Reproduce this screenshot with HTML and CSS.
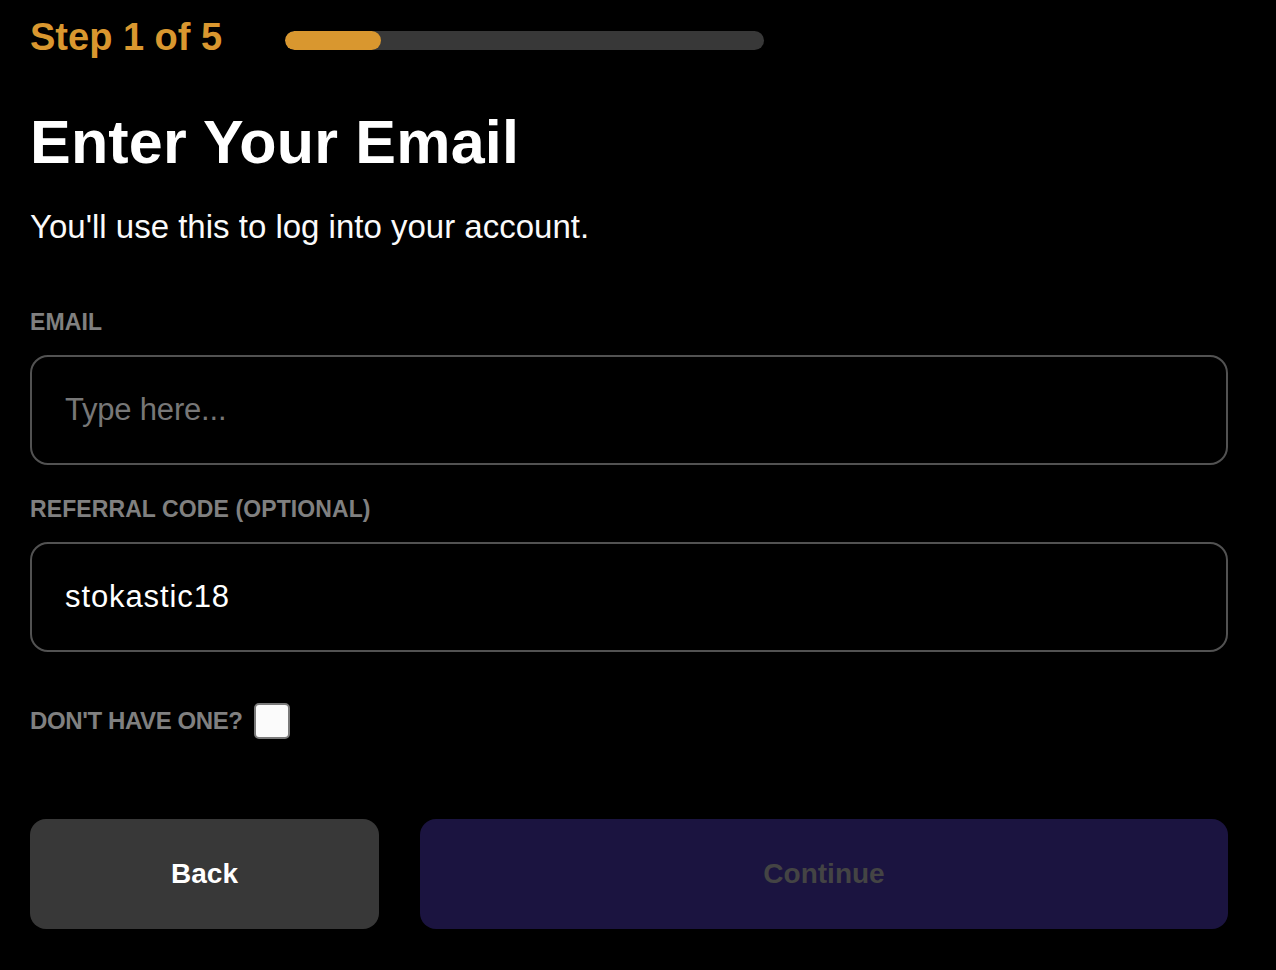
FILE: index.html
```html
<!DOCTYPE html>
<html lang="en">
<head>
<meta charset="utf-8">
<title>Enter Your Email</title>
<link rel="stylesheet" href="styles.css">
</head>
<body>
<main class="signup">
  <div class="progress-row">
    <span class="step">Step 1 of 5</span>
    <div class="track"><div class="fill" style="width:20%"></div></div>
  </div>
  <h1 class="title">Enter Your Email</h1>
  <p class="subtitle">You'll use this to log into your account.</p>
  <label class="field-label" for="email">EMAIL</label>
  <input class="text-input" id="email" type="text" placeholder="Type here...">
  <label class="field-label field-label--second" for="referral">REFERRAL CODE (OPTIONAL)</label>
  <input class="text-input" id="referral" type="text" value="stokastic18">
  <div class="no-code">
    <span class="no-code-text">DON'T HAVE ONE?</span>
    <span class="checkbox"></span>
  </div>
  <div class="actions">
    <button class="btn btn-back" type="button">Back</button>
    <button class="btn btn-continue" type="button" disabled>Continue</button>
  </div>
</main>
</body>
</html>
```
FILE: styles.css
```css
html, body {
  margin: 0;
  padding: 0;
  background: #000;
}

body {
  font-family: "Liberation Sans", Arial, sans-serif;
  color: #fff;
}

.signup {
  width: 1198px;
  margin-left: 30px;
  padding-top: 13px;
  display: flex;
  flex-direction: column;
}

.progress-row {
  display: flex;
  align-items: flex-start;
  gap: 63px;
  height: 48px;
}

.step {
  font-size: 38px;
  line-height: 48px;
  font-weight: 700;
  color: #d9972f;
  white-space: nowrap;
}

.track {
  margin-top: 18px;
  width: 479px;
  height: 19px;
  border-radius: 10px;
  background: #383838;
  overflow: hidden;
}

.fill {
  height: 100%;
  border-radius: 10px;
  background: #d9972f;
}

.title {
  margin: 45px 0 0;
  font-size: 61px;
  line-height: 72px;
  font-weight: 700;
  letter-spacing: 0.2px;
  color: #fff;
}

.subtitle {
  margin: 27px 0 0;
  font-size: 33px;
  line-height: 44px;
  font-weight: 400;
  color: #fafafa;
}

.field-label {
  margin-top: 59px;
  font-size: 23px;
  line-height: 28px;
  font-weight: 700;
  letter-spacing: 0.1px;
  color: #808080;
}

.field-label--second {
  margin-top: 30px;
}

.text-input {
  margin-top: 19px;
  box-sizing: border-box;
  width: 100%;
  height: 110px;
  padding: 0 0 0 33px;
  border: 2px solid #525252;
  border-radius: 18px;
  background: #000;
  color: #fff;
  font-family: "Liberation Sans", Arial, sans-serif;
  font-size: 31px;
  letter-spacing: 0.9px;
  outline: none;
}

.text-input::placeholder {
  color: #777;
  letter-spacing: -0.2px;
  opacity: 1;
}

.no-code {
  margin-top: 51px;
  display: flex;
  align-items: center;
  gap: 11px;
  height: 36px;
}

.no-code-text {
  font-size: 24px;
  line-height: 36px;
  font-weight: 700;
  letter-spacing: -0.4px;
  color: #808080;
}

.checkbox {
  box-sizing: border-box;
  width: 36px;
  height: 36px;
  border: 2px solid #7a7a7a;
  border-radius: 5px;
  background: #fbfbfb;
}

.actions {
  margin-top: 80px;
  display: flex;
  gap: 41px;
}

.btn {
  height: 110px;
  border: none;
  border-radius: 16px;
  font-family: "Liberation Sans", Arial, sans-serif;
  font-size: 28px;
  font-weight: 700;
  cursor: pointer;
}

.btn-back {
  width: 349px;
  background: #383838;
  color: #fff;
}

.btn-continue {
  flex: 1;
  background: #1b1440;
  color: #444;
}
```
